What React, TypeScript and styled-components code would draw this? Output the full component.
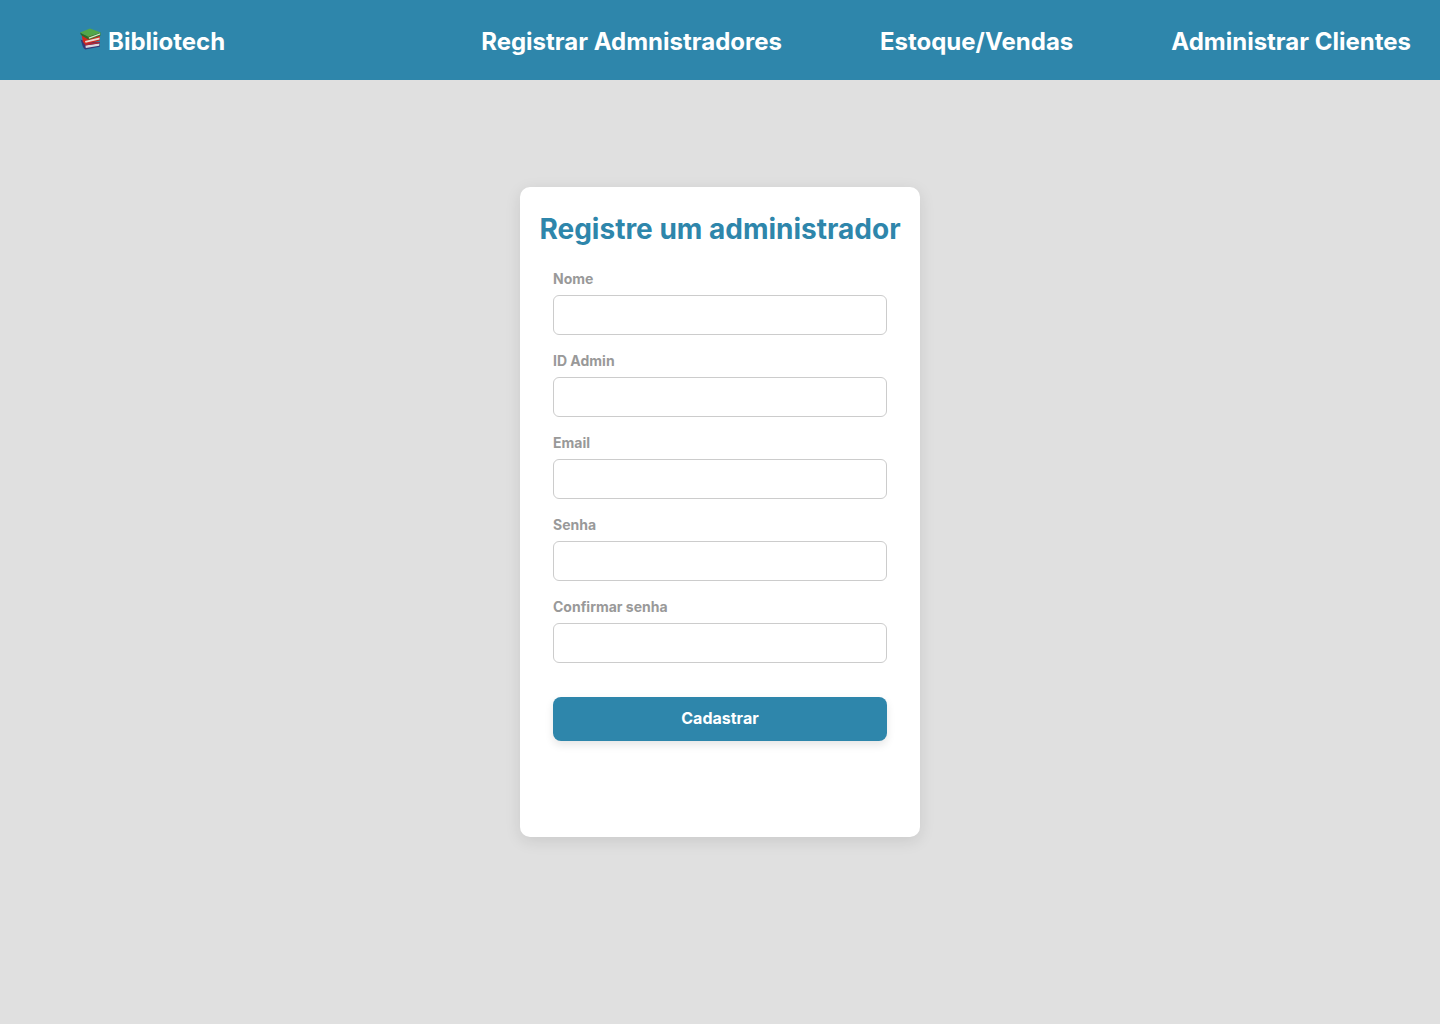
import React from "react";
import styled, { createGlobalStyle } from "styled-components";

const GlobalStyle = createGlobalStyle`
  *, *::before, *::after { box-sizing: border-box; }
  body {
    margin: 0;
    background: #e0e0e0;
    font-family: Inter, "Liberation Sans", sans-serif;
  }
`;

const Page = styled.div`
  min-height: 100vh;
  display: flex;
  flex-direction: column;
`;

const Header = styled.header`
  display: flex;
  align-items: center;
  justify-content: space-between;
  height: 80px;
  padding: 4px 29px 0 80px;
  background: #2e86ab;
`;

const Brand = styled.a`
  display: flex;
  align-items: flex-start;
  gap: 6px;
  color: #fff;
  font-size: 24px;
  font-weight: 700;
  line-height: 28px;
  text-decoration: none;
`;

const BooksSvg = styled.svg`
  width: 22px;
  height: 24px;
`;

const Nav = styled.nav`
  display: flex;
  gap: 98px;
`;

const NavLink = styled.a`
  color: #fff;
  font-size: 24px;
  font-weight: 700;
  line-height: 28px;
  text-decoration: none;
  white-space: nowrap;
`;

const Main = styled.main`
  flex: 1;
  display: flex;
  justify-content: center;
  align-items: flex-start;
  padding: 107px 24px;
`;

const Card = styled.form`
  display: flex;
  flex-direction: column;
  width: 400px;
  padding: 24px 33px 96px;
  border-radius: 10px;
  background: #fff;
  box-shadow: 0 4px 16px rgba(0, 0, 0, 0.1);
`;

const Title = styled.h1`
  align-self: center;
  margin: 0 0 24px;
  color: #2e86ab;
  font-size: 28px;
  font-weight: 700;
  line-height: 36px;
  white-space: nowrap;
`;

const Fields = styled.div`
  display: flex;
  flex-direction: column;
  gap: 18px;
  margin-bottom: 34px;
`;

const Field = styled.label`
  display: flex;
  flex-direction: column;
  gap: 8px;
  color: #999;
  font-size: 14px;
  font-weight: 700;
  line-height: 16px;
`;

const Input = styled.input`
  height: 40px;
  padding: 0 12px;
  border: 1px solid #ccc;
  border-radius: 6px;
  background: #fff;
  font: inherit;
  color: #333;
`;

const Submit = styled.button`
  height: 44px;
  padding: 0 16px 2px;
  border: 0;
  border-radius: 8px;
  background: #2e86ab;
  box-shadow: 0 4px 8px rgba(0, 0, 0, 0.1);
  color: #fff;
  font-family: inherit;
  font-size: 16px;
  font-weight: 700;
  cursor: pointer;
`;

const links = ["Registrar Admnistradores", "Estoque/Vendas", "Administrar Clientes"];

const fields = [
  { name: "nome", label: "Nome", type: "text" },
  { name: "id", label: "ID Admin", type: "text" },
  { name: "email", label: "Email", type: "email" },
  { name: "senha", label: "Senha", type: "password" },
  { name: "confirmar", label: "Confirmar senha", type: "password" },
];

function Books() {
  return (
    <BooksSvg viewBox="0 0 22 24" aria-hidden="true">
      {/* blue book at the bottom */}
      <path d="M0.6 11.4 4 13 19.6 14 19.8 18.8 5.2 21.4Q3.6 20.8 2.8 18.6Z" fill="#343a78" />
      <path d="M5.4 17.4 19.4 15.4 19.2 17.8 5.8 20Z" fill="#dcd5dc" />
      <path d="M4.6 15.8 19.6 13.8 19.6 15.2 5 17.4Z" fill="#b32634" />
      {/* red book */}
      <path d="M1.8 7.4 8 6 19.8 8 19.8 12.6 5 16.2Q3.4 15.4 2.8 13.2Z" fill="#d3281e" />
      <path d="M5 13 19.6 9.6 19.4 11.6 5.6 14.8Z" fill="#e8dcd4" />
      {/* green book on top */}
      <path d="M0.2 4.4 8.2 8.6 8.8 11.8 1.6 7.4Q0.2 6.4 0.2 4.4Z" fill="#286b2b" />
      <path d="M8.2 8.6 20.6 4.4 20.6 7.4 8.8 11.8Z" fill="#2f7a30" />
      <path d="M8.8 9.4 20.2 5.2 20.2 6.6 9.2 10.8Z" fill="#dce6cb" />
      <path d="M0.2 4.4 10 0.4 20.8 4.4 8.2 8.8Z" fill="#52a649" />
    </BooksSvg>
  );
}

export default function App() {
  return (
    <Page>
      <GlobalStyle />
      <Header>
        <Brand href="#"><Books />Bibliotech</Brand>
        <Nav>
          {links.map((text) => <NavLink key={text} href="#">{text}</NavLink>)}
        </Nav>
      </Header>
      <Main>
        <Card>
          <Title>Registre um administrador</Title>
          <Fields>
            {fields.map((f) => (
              <Field key={f.name} htmlFor={f.name}>
                {f.label}
                <Input id={f.name} name={f.name} type={f.type} />
              </Field>
            ))}
          </Fields>
          <Submit type="button">Cadastrar</Submit>
        </Card>
      </Main>
    </Page>
  );
}
